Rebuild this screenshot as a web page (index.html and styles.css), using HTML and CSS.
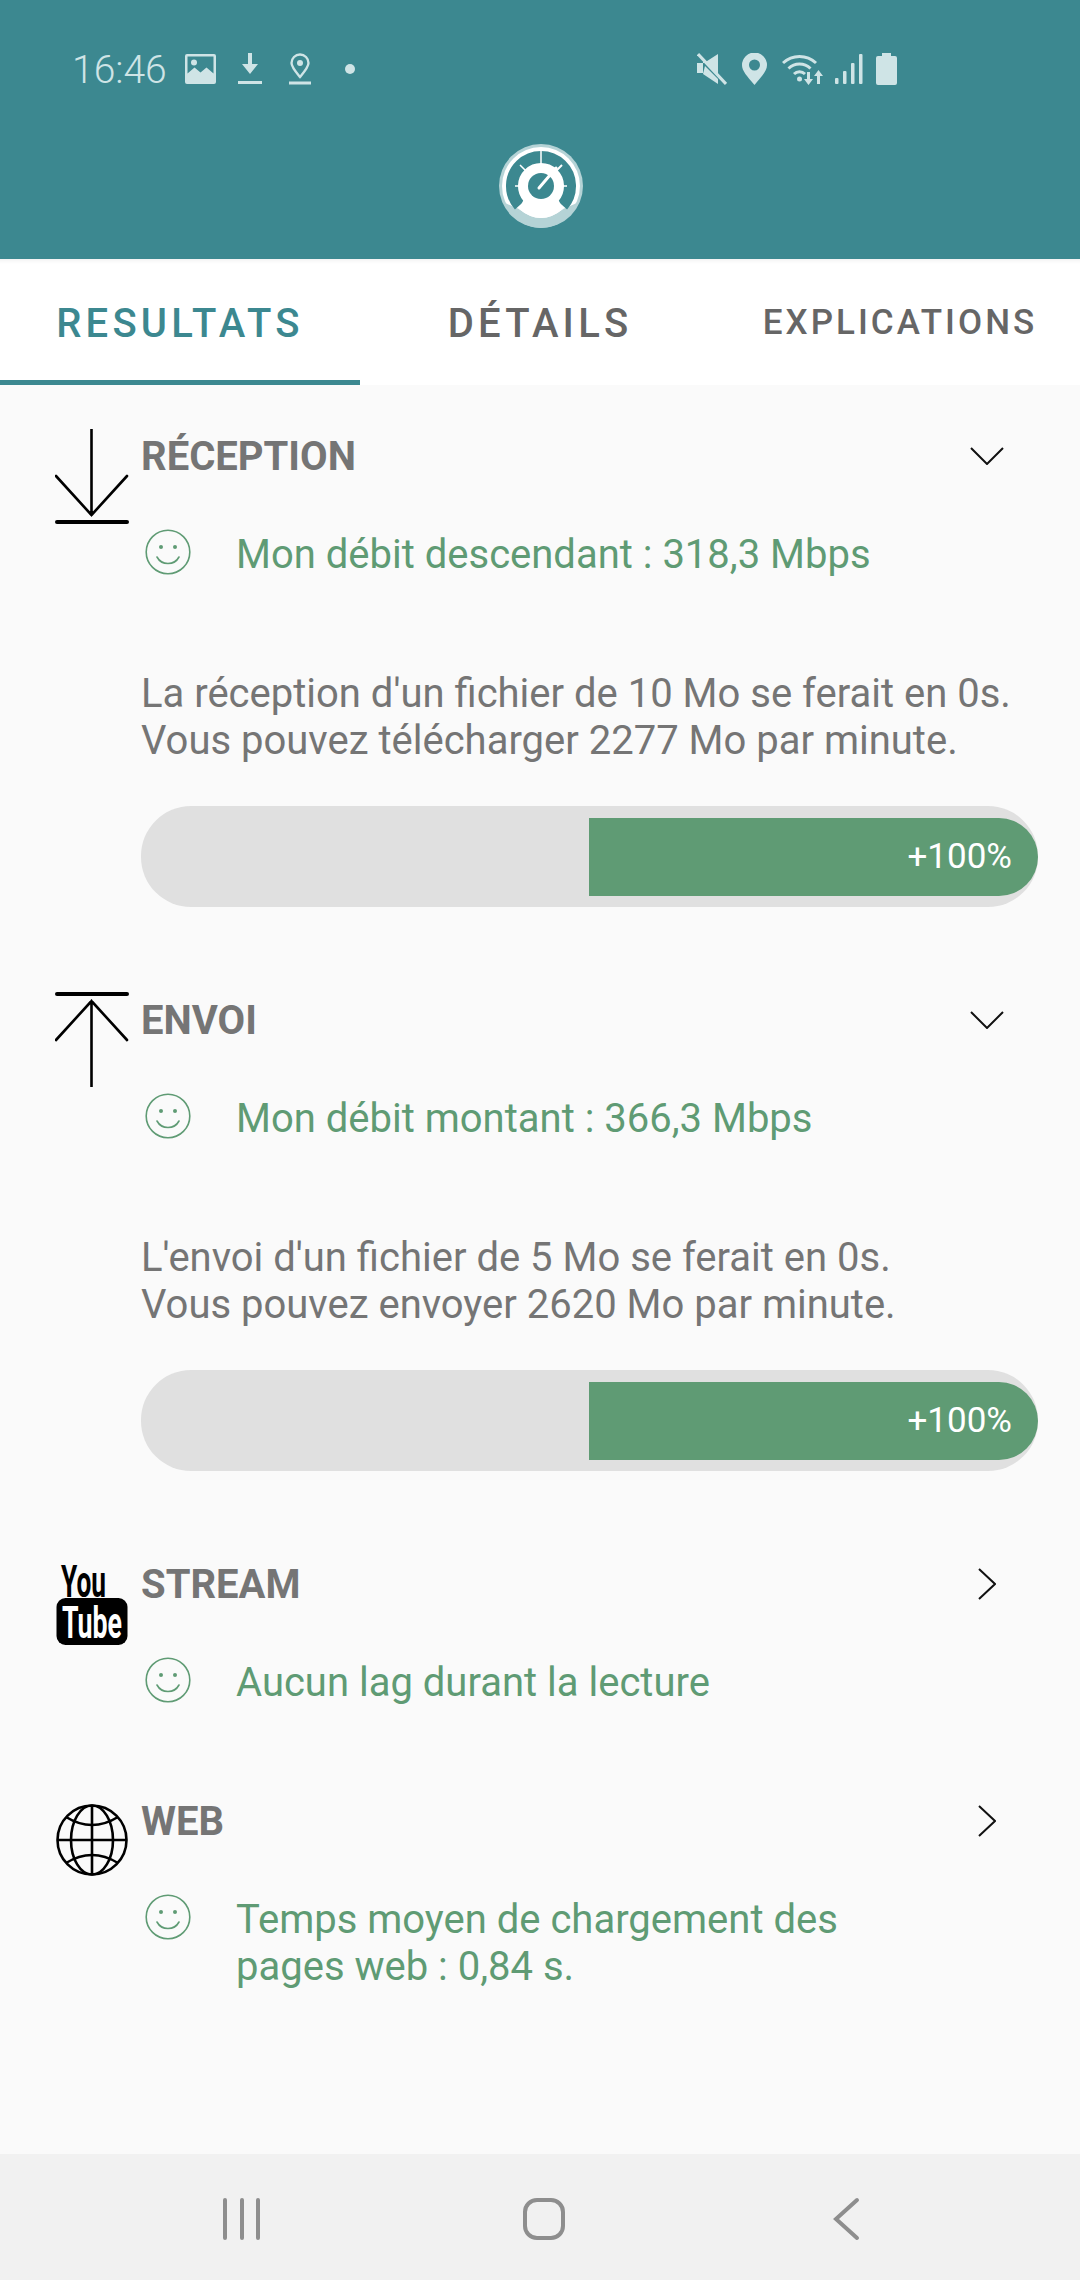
FILE: index.html
```html
<!DOCTYPE html>
<html>
<head>
    <link rel="stylesheet" href="styles.css">
</head>
<body>
    <div class="screen">
        <div class="header">
            <div class="statusbar">
                <div class="status-left">
                    <span class="time">16:46</span>
                    <svg class="ic-image" width="31" height="30" viewBox="0 0 31 30"><path fill-rule="evenodd" d="M2 0h27a2 2 0 0 1 2 2v26a2 2 0 0 1-2 2H2a2 2 0 0 1-2-2V2a2 2 0 0 1 2-2zM2.500 2.500v17l7-6 6 5 6-5 7 6v-17z"/><circle cx="9" cy="8.500" r="3"/></svg>
                    <svg class="ic-down" width="24" height="32" viewBox="0 0 24 32"><path d="M10 0h4v11h6l-8 10-8-10h6z"/><rect y="28" width="24" height="3"/></svg>
                    <svg class="ic-pin-o" width="22" height="32" viewBox="0 0 22 32"><path fill="none" stroke-width="2.400" d="M11 24C6 18 2.500 14 2.500 10a8.500 8.500 0 0 1 17 0c0 4-3.500 8-8.500 14z"/><circle class="hole" cx="11" cy="10" r="3"/><rect y="28.500" width="22" height="3"/></svg>
                    <span class="dot"></span>
                </div>
                <div class="status-right">
                    <svg class="ic-mute" width="30" height="32" viewBox="0 0 30 32"><path d="M0 10h7L21 1v22L6 8v12H0z"/><path d="M6 21l15 10v-5L8 13z"/><path class="cut" d="M1 1l28 30"/></svg>
                    <svg class="ic-pin" width="25" height="32" viewBox="0 0 25 32"><path fill-rule="evenodd" d="M12.500 32C5 23 0 18 0 12a12.500 12.500 0 0 1 25 0c0 6-5 11-12.500 20zM12.500 6.500a5.500 5.500 0 1 0 0 11 5.500 5.500 0 0 0 0-11z"/></svg>
                    <svg class="ic-wifi" width="42" height="32" viewBox="0 0 42 32"><path class="wave" d="M1 10a24 24 0 0 1 33 0M6.500 15.500a16 16 0 0 1 22 0M12 21a8 8 0 0 1 11 0"/><circle cx="17.500" cy="26" r="2.500"/><path d="M25 19h3v7h3l-4.500 6-4.500-6h3z"/><path d="M35 31h3v-8h3l-4.500-6-4.500 6h3z"/></svg>
                    <svg class="ic-signal" width="28" height="30" viewBox="0 0 28 30"><rect y="24" width="3.500" height="6" rx="1"/><rect x="8" y="17" width="3.500" height="13" rx="1"/><rect x="16" y="9" width="3.500" height="21" rx="1"/><rect x="24" y="0" width="3.500" height="30" rx="1"/></svg>
                    <svg class="ic-battery" width="21" height="32" viewBox="0 0 21 32"><path d="M6 0h9v3h4a2 2 0 0 1 2 2v25a2 2 0 0 1-2 2H2a2 2 0 0 1-2-2V5a2 2 0 0 1 2-2h4z"/></svg>
                </div>
            </div>
            <svg class="logo" width="86" height="86" viewBox="0 0 86 86">
                <circle cx="43" cy="43" r="42" fill="#b5d3d6"/>
                <circle cx="43" cy="43" r="39" fill="#fff"/>
                <path d="M7 60L21 66Q43 84 65 66L79 60A39 39 0 0 1 43 85A39 39 0 0 1 7 60z" fill="#b5d3d6"/>
                <path d="M21.400 62.400A29 29 0 1 1 64.600 62.400" fill="none" stroke="#3c8890" stroke-width="12"/>
                <path d="M43 6v20M17 43h20M69 43H49M22 22l12 12" stroke="#fff" stroke-width="1.500"/>
                <path d="M64 22L50 36" stroke="#fff" stroke-width="2"/>
                <path d="M21 66Q43 84 65 66L58 52H28z" fill="#fff"/>
                <circle cx="43" cy="43" r="21" fill="#fff"/>
                <circle cx="43" cy="43" r="13" fill="#3c8890"/>
                <path d="M41 45L58 25" stroke="#fff" stroke-width="3" stroke-linecap="round"/>
            </svg>
        </div>

        <div class="tabs">
            <div class="tab active">RESULTATS</div>
            <div class="tab">DÉTAILS</div>
            <div class="tab small">EXPLICATIONS</div>
        </div>

        <div class="content">
            <div class="section">
                <svg class="sec-icon" width="74" height="96" viewBox="0 0 74 96">
                    <path d="M36.500 0v86M1 47l35.500 39L72 47" fill="none" stroke="#000" stroke-width="2.600" stroke-linecap="round"/>
                    <path d="M2 93h70" stroke="#000" stroke-width="4" stroke-linecap="round"/>
                </svg>
                <div class="sec-body">
                    <div class="sec-head">
                        <div class="sec-title">RÉCEPTION</div>
                        <svg class="chev" width="34" height="18" viewBox="0 0 34 18"><path d="M1 1l16 16L33 1"/></svg>
                    </div>
                    <div class="result">
                        <svg class="smile" width="46" height="46" viewBox="0 0 46 46"><circle cx="23" cy="23" r="21.800"/><path d="M12 28a12.500 12.500 0 0 0 22 0"/><circle class="eye" cx="16" cy="18" r="2"/><circle class="eye" cx="30" cy="18" r="2"/></svg>
                        <div class="result-text">Mon débit descendant : 318,3 Mbps</div>
                    </div>
                    <div class="desc">La réception d'un fichier de 10 Mo se ferait en 0s.<br>Vous pouvez télécharger 2277 Mo par minute.</div>
                    <div class="bar"><div class="bar-fill" style="width: 50.100%">+100%</div></div>
                </div>
            </div>

            <div class="section">
                <svg class="sec-icon icon-up" width="74" height="96" viewBox="0 0 74 96">
                    <path d="M36.500 96V10M1 49L36.500 10 72 49" fill="none" stroke="#000" stroke-width="2.600" stroke-linecap="round"/>
                    <path d="M2 3h70" stroke="#000" stroke-width="4" stroke-linecap="round"/>
                </svg>
                <div class="sec-body">
                    <div class="sec-head">
                        <div class="sec-title">ENVOI</div>
                        <svg class="chev" width="34" height="18" viewBox="0 0 34 18"><path d="M1 1l16 16L33 1"/></svg>
                    </div>
                    <div class="result">
                        <svg class="smile" width="46" height="46" viewBox="0 0 46 46"><circle cx="23" cy="23" r="21.800"/><path d="M12 28a12.500 12.500 0 0 0 22 0"/><circle class="eye" cx="16" cy="18" r="2"/><circle class="eye" cx="30" cy="18" r="2"/></svg>
                        <div class="result-text">Mon débit montant : 366,3 Mbps</div>
                    </div>
                    <div class="desc">L'envoi d'un fichier de 5 Mo se ferait en 0s.<br>Vous pouvez envoyer 2620 Mo par minute.</div>
                    <div class="bar"><div class="bar-fill" style="width: 50.100%">+100%</div></div>
                </div>
            </div>

            <div class="section">
                <svg class="sec-icon icon-yt" width="74" height="84" viewBox="0 0 74 84">
                    <text class="yt-you" x="6" y="32" textLength="45" lengthAdjust="spacingAndGlyphs">You</text>
                    <rect x="1.500" y="33" width="71" height="47" rx="9" fill="#000"/>
                    <text class="yt-tube" x="7" y="73" textLength="60" lengthAdjust="spacingAndGlyphs">Tube</text>
                </svg>
                <div class="sec-body">
                    <div class="sec-head">
                        <div class="sec-title">STREAM</div>
                        <svg class="chev-r" width="18" height="32" viewBox="0 0 18 32"><path d="M1 1l16 15L1 31"/></svg>
                    </div>
                    <div class="result">
                        <svg class="smile" width="46" height="46" viewBox="0 0 46 46"><circle cx="23" cy="23" r="21.800"/><path d="M12 28a12.500 12.500 0 0 0 22 0"/><circle class="eye" cx="16" cy="18" r="2"/><circle class="eye" cx="30" cy="18" r="2"/></svg>
                        <div class="result-text">Aucun lag durant la lecture</div>
                    </div>
                </div>
            </div>

            <div class="section">
                <svg class="sec-icon icon-web" width="74" height="74" viewBox="0 0 74 74">
                    <g fill="none" stroke="#000" stroke-width="2.600">
                        <circle cx="37" cy="37" r="34.500"/>
                        <ellipse cx="37" cy="37" rx="21" ry="34.500"/>
                        <path d="M37 2.500v69M2.500 37h69"/>
                        <path d="M11 14q26 16 52 0M11 60q26-16 52 0"/>
                    </g>
                </svg>
                <div class="sec-body">
                    <div class="sec-head">
                        <div class="sec-title">WEB</div>
                        <svg class="chev-r" width="18" height="32" viewBox="0 0 18 32"><path d="M1 1l16 15L1 31"/></svg>
                    </div>
                    <div class="result">
                        <svg class="smile" width="46" height="46" viewBox="0 0 46 46"><circle cx="23" cy="23" r="21.800"/><path d="M12 28a12.500 12.500 0 0 0 22 0"/><circle class="eye" cx="16" cy="18" r="2"/><circle class="eye" cx="30" cy="18" r="2"/></svg>
                        <div class="result-text">Temps moyen de chargement des<br>pages web : 0,84 s.</div>
                    </div>
                </div>
            </div>
        </div>

        <div class="navbar">
            <svg width="36" height="42" viewBox="0 0 36 42"><path d="M3 2v38M20 2v38M36 2v38"/></svg>
            <svg width="44" height="44" viewBox="0 0 44 44"><rect x="3" y="3" width="38" height="38" rx="12"/></svg>
            <svg width="26" height="42" viewBox="0 0 26 42"><path d="M24 2L3 21l21 19"/></svg>
        </div>
    </div>
</body>
</html>
```

FILE: styles.css
```css
html, body {
    margin: 0;
    padding: 0;
}
body {
    font-family: 'Roboto', 'Liberation Sans', sans-serif;
    background: #fafafa;
}
.screen {
    width: 1080px;
    height: 2280px;
    display: flex;
    flex-direction: column;
    overflow: hidden;
}
.header {
    background: #3c8890;
    height: 259px;
    flex: none;
    display: flex;
    flex-direction: column;
    align-items: center;
}
.statusbar {
    width: 100%;
    height: 143px;
    padding: 0 183px 6px 72px;
    box-sizing: border-box;
    display: flex;
    justify-content: space-between;
    align-items: center;
    color: #cfe4e6;
}
.status-left, .status-right {
    display: flex;
    align-items: center;
}
.statusbar svg {
    fill: #cfe4e6;
    stroke: #cfe4e6;
    stroke-width: 0;
}
.statusbar svg .hole {
    fill: #cfe4e6;
}
.statusbar svg .cut {
    stroke: #cfe4e6;
    stroke-width: 3;
}
.statusbar svg .wave {
    fill: none;
    stroke-width: 3;
}
.statusbar .ic-pin-o path {
    stroke-width: 2.400;
}
.time {
    font-size: 39px;
    font-weight: 300;
    width: 113px;
    padding-top: 3px;
}
.ic-down {
    margin-left: 22px;
}
.ic-pin-o {
    margin-left: 27px;
}
.dot {
    width: 10px;
    height: 10px;
    border-radius: 50%;
    background: #cfe4e6;
    margin-left: 34px;
}
.ic-pin {
    margin-left: 15px;
}
.ic-wifi {
    margin-left: 15px;
}
.ic-signal {
    margin-left: 11px;
}
.ic-battery {
    margin-left: 13px;
}
.logo {
    margin-left: 2px;
}
.tabs {
    height: 126px;
    flex: none;
    background: #fff;
    display: flex;
    box-shadow: inset 0 6px 5px -5px rgba(0,0,0,0.08);
}
.tab {
    width: 360px;
    box-sizing: border-box;
    padding-top: 2px;
    display: flex;
    align-items: center;
    justify-content: center;
    font-size: 40px;
    font-weight: 500;
    letter-spacing: 4.200px;
    color: #666;
}
.tab.active {
    color: #3c8890;
    border-bottom: 5px solid #3c8890;
    padding-top: 7px;
}
.tab.small {
    font-size: 35px;
    letter-spacing: 3px;
    padding-top: 1px;
}
.content {
    flex: 1;
    padding-top: 44px;
    background: #fafafa;
}
.section {
    display: flex;
    align-items: flex-start;
    margin-bottom: 86px;
}
.section:nth-child(3) {
    margin-bottom: 88px;
}
.sec-icon {
    flex: none;
    margin-left: 55px;
    margin-right: 12px;
}
.icon-up {
    margin-top: -2px;
    margin-bottom: 2px;
}
.icon-yt {
    margin-top: 8px;
    overflow: visible;
}
.icon-web {
    margin-top: 9px;
}
.sec-body {
    width: 897px;
}
.sec-head {
    display: flex;
    justify-content: space-between;
    align-items: center;
    height: 56px;
}
.sec-title {
    font-size: 40px;
    font-weight: 700;
    color: #757575;
    margin-bottom: 2px;
}
.chev, .chev-r {
    fill: none;
    stroke: #111;
    stroke-width: 2;
    margin-bottom: 2px;
}
.chev {
    margin-right: 34px;
}
.chev-r {
    margin-right: 42px;
}
.result {
    display: flex;
    align-items: flex-start;
    margin-top: 44px;
    font-size: 40px;
    line-height: 47px;
    color: #5f9b74;
}
.result-text {
    margin-top: 2px;
}
.smile {
    flex: none;
    margin-left: 4px;
    margin-right: 45px;
}
.smile circle, .smile path {
    fill: none;
    stroke: #5f9b74;
    stroke-width: 1.600;
}
.smile .eye {
    fill: #5f9b74;
    stroke: none;
}
.smile path {
    stroke-linecap: round;
}
.desc {
    margin-top: 92px;
    font-size: 40px;
    line-height: 47px;
    color: #757575;
}
.bar {
    margin-top: 42px;
    height: 101px;
    background: #e0e0e0;
    border-radius: 50px;
    display: flex;
    align-items: center;
    justify-content: flex-end;
}
.bar-fill {
    height: 78px;
    box-sizing: border-box;
    background: #5f9b74;
    border-radius: 0 39px 39px 0;
    color: #fff;
    font-size: 35px;
    line-height: 78px;
    text-align: right;
    padding-right: 26px;
}
.yt-you, .yt-tube {
    font-family: 'Roboto', sans-serif;
    font-weight: 700;
    font-size: 45px;
}
.yt-tube {
    fill: #fff;
}
.navbar {
    height: 126px;
    flex: none;
    box-sizing: border-box;
    padding-top: 3px;
    background: #f1f1f1;
    display: flex;
    align-items: center;
}
.navbar svg {
    fill: none;
    stroke: #8e8e8e;
    stroke-width: 4;
    stroke-linecap: round;
    overflow: visible;
}
.navbar svg:nth-child(1) {
    margin-left: 222px;
}
.navbar svg:nth-child(2) {
    margin-left: 264px;
}
.navbar svg:nth-child(3) {
    margin-left: 267px;
}
```
